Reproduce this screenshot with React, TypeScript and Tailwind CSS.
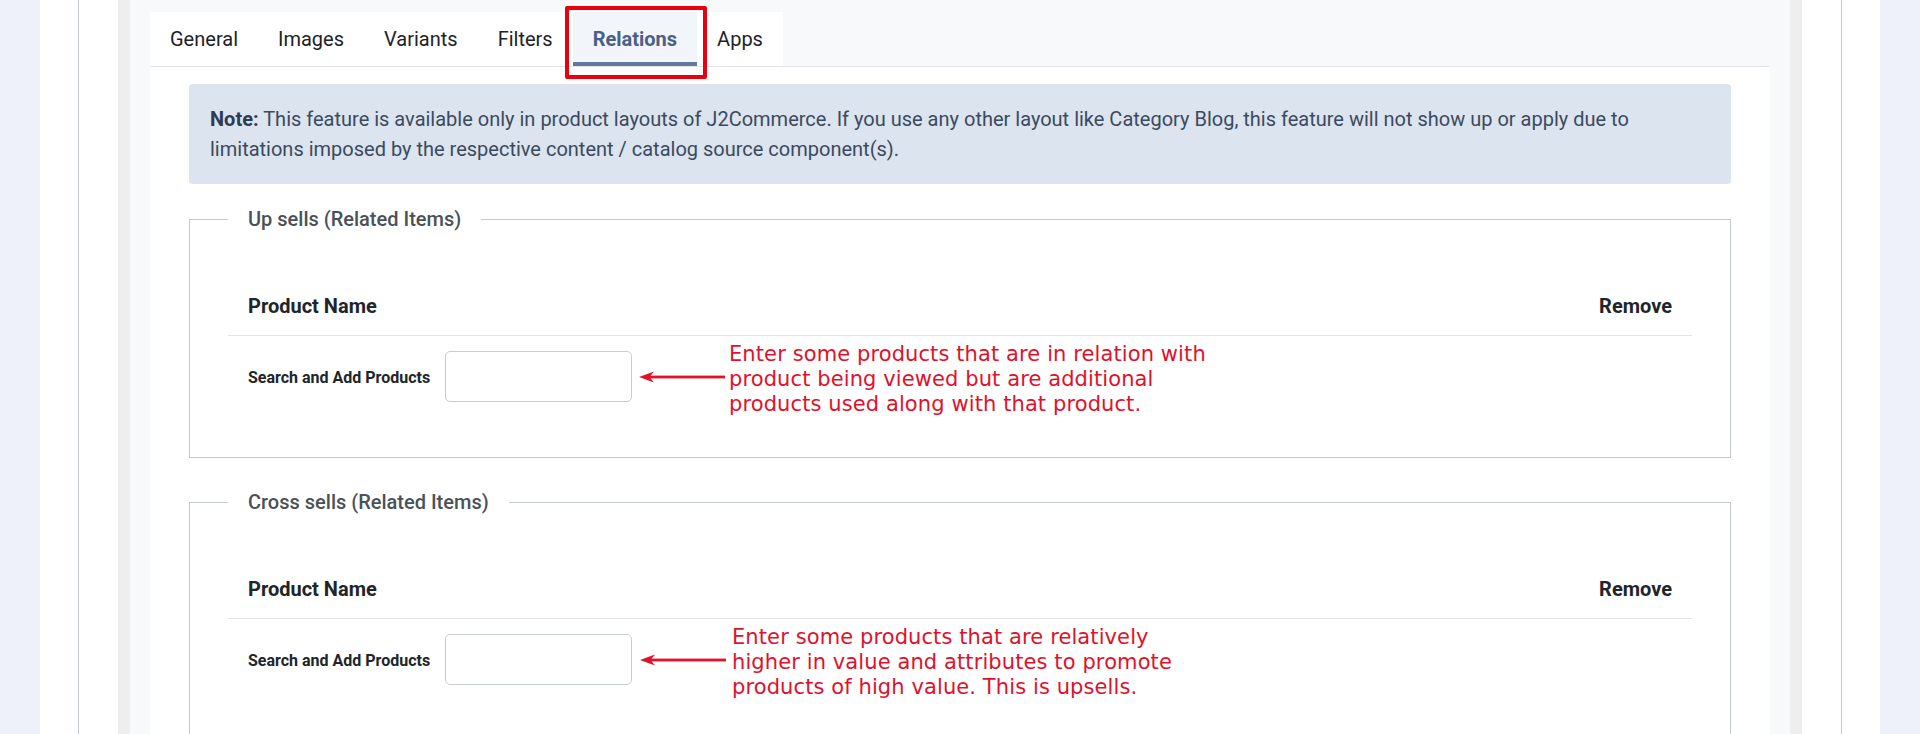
import React from "react";

function Arrow() {
  return (
    <svg width="86" height="12" viewBox="0 0 86 12" className="shrink-0">
      <polygon points="0,6 15,0.5 10.5,6 15,11.5" fill="#e3102c" />
      <rect x="9" y="4.6" width="77" height="2.8" fill="#e3102c" />
    </svg>
  );
}

function Annotation({ lines, arrowGap, textGap }: { lines: string[]; arrowGap: string; textGap: string }) {
  return (
    <>
      <div className={arrowGap + " flex items-center"}>
        <Arrow />
      </div>
      <div
        className={
          textGap +
          " mt-[5px] shrink-0 whitespace-nowrap font-['DejaVu_Sans',sans-serif] text-[21px] leading-[25px] tracking-[0.1px] text-[#e0112b]"
        }
      >
        {lines.map((l, i) => (
          <div key={i}>{l}</div>
        ))}
      </div>
    </>
  );
}

function Section({
  title,
  className,
  lines,
  arrowGap,
  textGap,
}: {
  title: string;
  className: string;
  lines: string[];
  arrowGap: string;
  textGap: string;
}) {
  return (
    <fieldset className={className + " border border-[#c5cad6] px-[38px] pt-[42px] pb-[40px]"}>
      <legend className="px-5 text-[20px] font-medium leading-[30px] text-[#4a5158]">{title}</legend>
      <div className="flex h-[60px] items-center justify-between border-b border-[#e1e3e6] px-5 text-[20px] font-bold text-[#212529]">
        <span>Product Name</span>
        <span>Remove</span>
      </div>
      <div className="flex h-[81px] items-center px-5">
        <span className="w-[197px] shrink-0 pt-[3px] text-[16px] font-bold text-[#212529]">Search and Add Products</span>
        <div className="h-[51px] w-[187px] shrink-0 rounded-[5px] border border-[#c8ccd6] bg-white" />
        <Annotation lines={lines} arrowGap={arrowGap} textGap={textGap} />
      </div>
    </fieldset>
  );
}

export default function App() {
  const tabs = ["General", "Images", "Variants", "Filters", "Relations", "Apps"];
  return (
    <div className="h-[734px] w-full overflow-hidden bg-[#eef1fa] px-[40px] font-['Roboto',sans-serif]">
      <div className="h-full bg-white px-[38px]">
        <div className="h-full border-x border-[#c3c9d9] px-[39px]">
          <div className="flex h-full flex-col border-x-[12px] border-[#eeeeee] bg-[#f8f9fa] px-[20px] pt-[12px]">
            <div className="flex border-b border-[#e3e5e8]">
              <div className="flex bg-white">
                {tabs.map((t) =>
                  t === "Relations" ? (
                    <div
                      key={t}
                      className="relative flex h-[54px] items-center border-b-4 border-[#6079a0] bg-[#f2f5f9] px-5 pt-[4px] text-[20px] font-bold text-[#4a6087]"
                    >
                      {t}
                      <div className="pointer-events-none absolute -top-[6px] -right-[10px] -bottom-[17px] -left-[8px] rounded-[2px] border-4 border-[#e8000e]" />
                    </div>
                  ) : (
                    <div key={t} className="flex h-[54px] items-center px-5 text-[20px] text-[#1e2227]">
                      {t}
                    </div>
                  )
                )}
              </div>
            </div>
            <div className="flex-1 bg-white px-[39px] pt-[17px]">
              <div className="rounded-[4px] bg-[#dbe4ef] px-[21px] py-[20px] text-[20px] leading-[30px] text-[#3b4a5e]">
                <span className="font-bold text-[#2e3c52]">Note:</span> This feature is available only in product layouts of
                J2Commerce. If you use any other layout like Category Blog, this feature will not show up or apply due to
                <br />
                limitations imposed by the respective content / catalog source component(s).
              </div>
              <Section
                title="Up sells (Related Items)"
                className="mt-[20px]"
                arrowGap="ml-[7px]"
                textGap="ml-[4px]"
                lines={[
                  "Enter some products that are in relation with",
                  "product being viewed but are additional",
                  "products used along with that product.",
                ]}
              />
              <Section
                title="Cross sells (Related Items)"
                className="mt-[29px]"
                arrowGap="ml-[8px]"
                textGap="ml-[6px]"
                lines={[
                  "Enter some products that are relatively",
                  "higher in value and attributes to promote",
                  "products of high value. This is upsells.",
                ]}
              />
            </div>
          </div>
        </div>
      </div>
    </div>
  );
}
